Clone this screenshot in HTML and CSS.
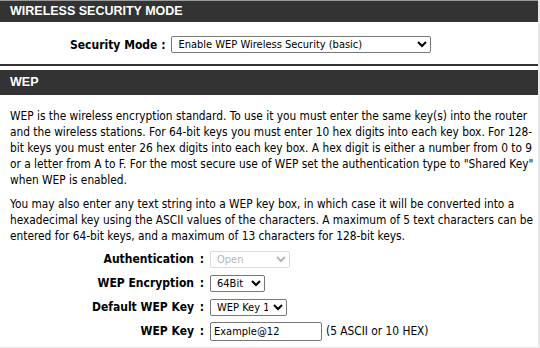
FILE: index.html
```html
<!DOCTYPE html>
<html lang="en">
<head>
    <meta charset="UTF-8">
    <title>Wireless Security</title>
    <link rel="stylesheet" href="styles.css">
</head>
<body>
    <div class="page">
        <div class="box">
            <h2 class="box-title">WIRELESS SECURITY MODE</h2>
            <div class="mode-row">
                <label class="label">Security Mode :</label>
                <select class="select select-mode">
                    <option>Enable WEP Wireless Security (basic)</option>
                </select>
            </div>
        </div>

        <div class="box box-wep">
            <h2 class="box-title">WEP</h2>
            <div class="box-body">
                <p class="desc">WEP is the wireless encryption standard. To use it you must enter the same key(s) into the router<br>
                and the wireless stations. For 64-bit keys you must enter 10 hex digits into each key box. For 128-<br>
                bit keys you must enter 26 hex digits into each key box. A hex digit is either a number from 0 to 9<br>
                or a letter from A to F. For the most secure use of WEP set the authentication type to "Shared Key"<br>
                when WEP is enabled.</p>
                <p class="desc">You may also enter any text string into a WEP key box, in which case it will be converted into a<br>
                hexadecimal key using the ASCII values of the characters. A maximum of 5 text characters can be<br>
                entered for 64-bit keys, and a maximum of 13 characters for 128-bit keys.</p>

                <div class="form">
                    <div class="form-row">
                        <span class="label">Authentication</span><span class="colon">:</span>
                        <select class="select select-auth" disabled><option>Open</option></select>
                    </div>
                    <div class="form-row">
                        <span class="label">WEP Encryption</span><span class="colon">:</span>
                        <select class="select select-enc"><option>64Bit</option></select>
                    </div>
                    <div class="form-row">
                        <span class="label">Default WEP Key</span><span class="colon">:</span>
                        <select class="select select-key"><option>WEP Key 1</option></select>
                    </div>
                    <div class="form-row">
                        <span class="label">WEP Key</span><span class="colon">:</span>
                        <input class="text-input" type="text" value="Example@12">
                        <span class="hint">(5 ASCII or 10 HEX)</span>
                    </div>
                </div>
            </div>
        </div>
    </div>
</body>
</html>
```

FILE: styles.css
```css
body {
    margin: 0;
    background: #e9e9e9;
    font-family: "DejaVu Sans Condensed", "DejaVu Sans", sans-serif;
    font-size: 11.8px;
    color: #000;
}
.page {
    width: 538px;
    height: 347px;
    background: #fff;
    border-top: 1px solid #9a9a9a;
    box-sizing: border-box;
    overflow: hidden;
}
.box-title {
    margin: 0;
    background: #333;
    color: #fff;
    font-family: "Liberation Sans", Arial, sans-serif;
    font-size: 12.5px;
    font-weight: bold;
    padding: 0 10px;
    height: 21px;
    line-height: 21px;
}
.box {
    border-bottom: 2px solid #333;
}
.box-wep {
    border-bottom: none;
    margin-top: 4px;
}
.box-wep .box-title {
    height: 25px;
    line-height: 25px;
}
.mode-row {
    display: flex;
    align-items: center;
    padding: 14px 0 11px 70px;
}
.mode-row .label {
    font-weight: bold;
    font-size: 12px;
    margin-right: 6px;
}
.select {
    font-family: "DejaVu Sans Condensed", "DejaVu Sans", sans-serif;
    font-size: 11px;
    height: 17px;
    padding: 0 2px;
    border: 1px solid #777;
    border-radius: 2px;
    background: #fff;
    color: #000;
}
.select-mode { width: 260px; }
.select-auth { width: 80px; color: #999; border-color: #ccc; }
.select-enc { width: 55px; }
.select-key { width: 77px; }
.box-body {
    padding-top: 13px;
}
.desc {
    margin: 0 0 0 10px;
    line-height: 16px;
}
.desc + .desc {
    margin-top: 8px;
}
.form {
    margin-top: 3px;
}
.form-row {
    display: flex;
    align-items: center;
    height: 24px;
}
.form-row .label {
    width: 194px;
    text-align: right;
    font-weight: bold;
    font-size: 12px;
}
.colon {
    width: 16px;
    text-align: center;
    font-weight: bold;
    font-size: 12px;
}
.text-input {
    font-family: "DejaVu Sans Condensed", "DejaVu Sans", sans-serif;
    font-size: 11px;
    width: 112px;
    height: 19px;
    box-sizing: border-box;
    padding: 0 3px;
    border: 1px solid #777;
    border-radius: 2px;
}
.hint {
    margin-left: 4px;
}
```
